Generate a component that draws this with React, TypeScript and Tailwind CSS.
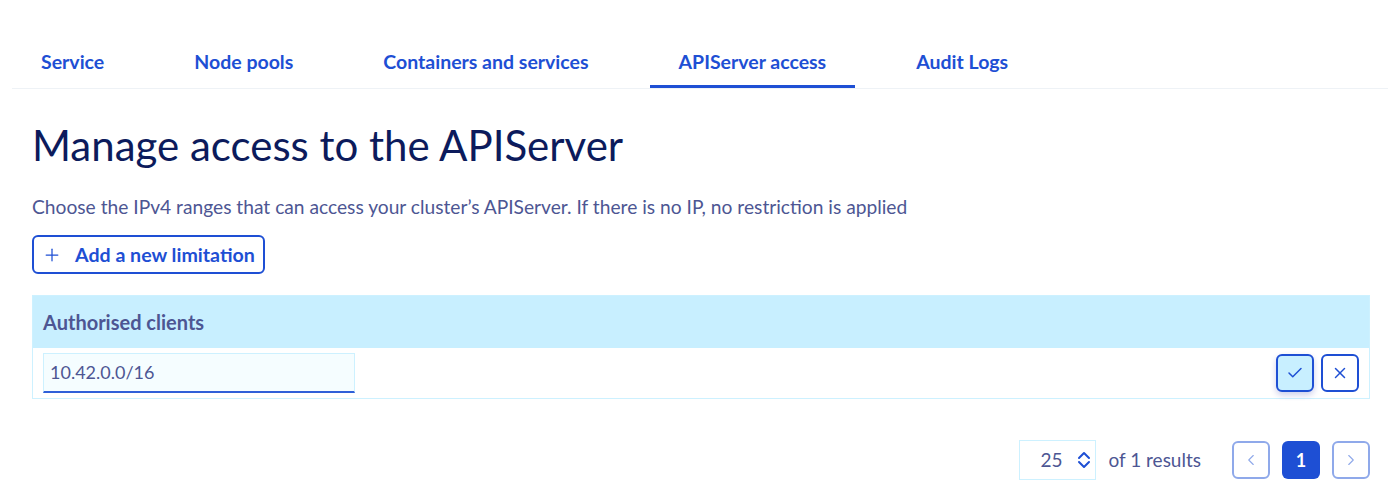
import { Plus, Check, X, ChevronLeft, ChevronRight } from 'lucide-react'

const tabs = ['Service', 'Node pools', 'Containers and services', 'APIServer access', 'Audit Logs']

function UpDown() {
  return (
    <svg width="14" height="18" viewBox="0 0 14 18" fill="none" stroke="#1e4fd4" strokeWidth="2" strokeLinecap="round" strokeLinejoin="round">
      <path d="M2 7l5-5 5 5" />
      <path d="M2 11l5 5 5-5" />
    </svg>
  )
}

export default function App() {
  return (
    <div className="w-[1400px] h-[494px] bg-white font-['Lato',sans-serif] text-[#4d5693] overflow-hidden">
      <div className="pt-[38px] mx-[12px] border-b border-[#eef2f6] flex gap-[32px]">
        {tabs.map(t => (
          <div
            key={t}
            className={`h-[50px] px-[29px] flex items-center text-[19.5px] font-bold text-[#1e4fd4] border-b-[3px] ${
              t === 'APIServer access' ? 'border-[#1e4fd4]' : 'border-transparent'
            }`}
          >
            {t}
          </div>
        ))}
      </div>

      <div className="pl-[32px] pr-[30px]">
        <h1 className="mt-[28px] text-[42px] leading-[56px] text-[#0c1b5c] font-normal">
          Manage access to the APIServer
        </h1>
        <p className="mt-[22px] text-[19.2px] leading-[24px]">
          Choose the IPv4 ranges that can access your cluster’s APIServer. If there is no IP, no restriction is applied
        </p>
        <button className="mt-[16px] h-[39px] w-[233px] pl-[8px] flex items-center gap-[13px] border-2 border-[#1e4fd4] rounded-[6px] text-[#1e4fd4] text-[19.6px] font-bold">
          <Plus size={20} strokeWidth={1.5} />
          Add a new limitation
        </button>

        <div className="mt-[21px] border border-[#cdf1ff]">
          <div className="h-[52px] bg-[#c8efff] flex items-center px-[10px] text-[20px] font-bold text-[#4d5693]">
            Authorised clients
          </div>
          <div className="h-[50px] flex items-center px-[10px] justify-between">
            <div className="w-[312px] h-[40px] bg-[#f5fdff] border border-[#cdf1ff] border-b-2 border-b-[#2f5fd8] flex items-center px-[6px] text-[18px]">
              10.42.0.0/16
            </div>
            <div className="flex gap-[7px]">
              <button className="w-[38px] h-[38px] rounded-[6px] border-2 border-[#1e4fd4] bg-[#c8efff] flex items-center justify-center text-[#1e4fd4] shadow-[0_3px_6px_rgba(0,14,156,0.2)]">
                <Check size={18} strokeWidth={2} />
              </button>
              <button className="w-[38px] h-[38px] rounded-[6px] border-2 border-[#1e4fd4] bg-white flex items-center justify-center text-[#1e4fd4]">
                <X size={18} strokeWidth={2} />
              </button>
            </div>
          </div>
        </div>

        <div className="mt-[41px] flex justify-end items-center">
          <div className="w-[77px] h-[40px] border border-[#cdf1ff] flex items-center pl-[20px] gap-[14px] text-[19px]">
            <span>25</span>
            <UpDown />
          </div>
          <span className="ml-[12px] text-[19px]">of 1 results</span>
          <div className="ml-[31px] flex gap-[12px]">
            <button className="w-[38px] h-[38px] rounded-[6px] border-2 border-[#8fa9ea] flex items-center justify-center text-[#8fa9ea]">
              <ChevronLeft size={18} strokeWidth={1.5} />
            </button>
            <button className="w-[38px] h-[38px] rounded-[6px] bg-[#1e4fd4] flex items-center justify-center text-white text-[18px] font-bold">
              1
            </button>
            <button className="w-[38px] h-[38px] rounded-[6px] border-2 border-[#8fa9ea] flex items-center justify-center text-[#8fa9ea]">
              <ChevronRight size={18} strokeWidth={1.5} />
            </button>
          </div>
        </div>
      </div>
    </div>
  )
}
